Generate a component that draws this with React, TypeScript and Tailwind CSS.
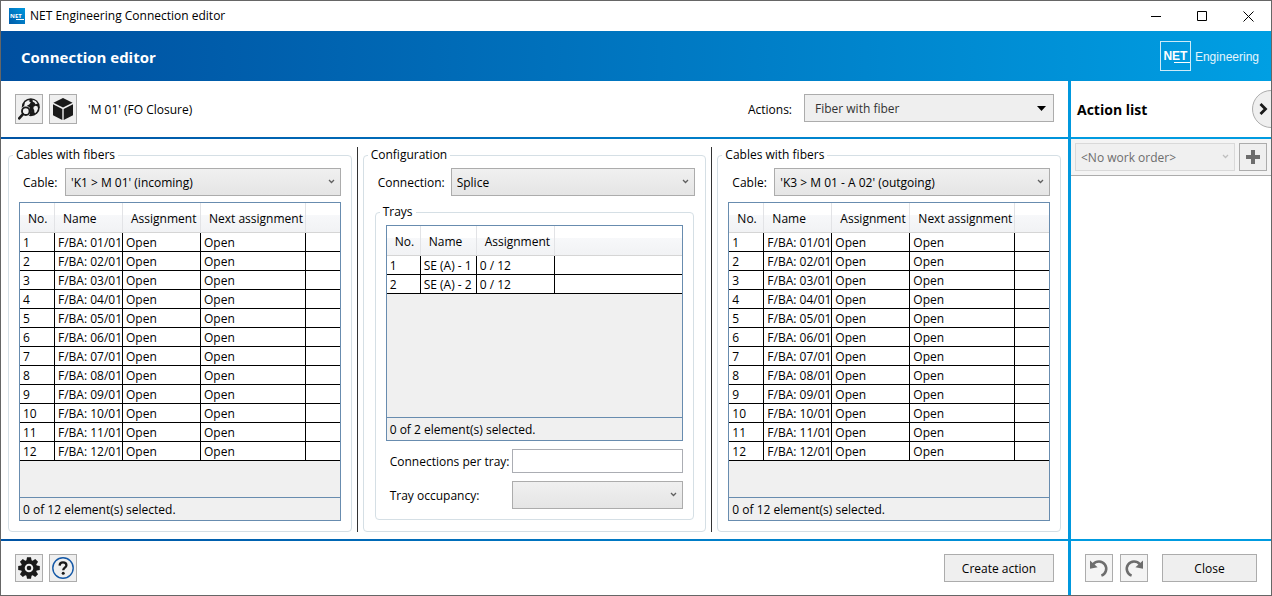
import { ReactNode } from 'react';

interface DataListProps {
  columns: string[];
  rows: string[][];
  widths: string[];
  status: string;
}

interface SelectProps {
  id: string;
  value?: string;
  className?: string;
  label?: string;
  disabled?: boolean;
}

const fibers = Array.from({ length: 12 }, (_, i) => [
  `${i + 1}`,
  `F/BA: ${String(i + 1).padStart(2, '0')}/01`,
  'Open',
  'Open',
]);

const trays = [
  ['1', 'SE (A) - 1', '0 / 12'],
  ['2', 'SE (A) - 2', '0 / 12'],
];

function Select({ id, value = '', className = '', label, disabled = false }: SelectProps) {
  return (
    <div className={`relative h-7 min-w-0 ${className}`}>
      <select
        id={id}
        disabled={disabled}
        aria-label={label}
        className={`h-full w-full appearance-none border px-[5px] pt-px ${
          disabled
            ? 'border-[#d9d9d9] bg-[#f0f0f0] text-[#6d6d6d] opacity-100'
            : 'border-[#acacac] bg-linear-to-b from-[#f0f0f0] to-[#e5e5e5] text-black'
        }`}
      >
        <option>{value}</option>
      </select>
      <svg
        className={`pointer-events-none absolute top-[11px] right-1.5 ${disabled ? 'text-[#bfbfbf]' : 'text-[#606060]'}`}
        width="7"
        height="5"
        viewBox="0 0 7 5"
        fill="none"
        stroke="currentColor"
        strokeWidth="1.3"
      >
        <path d="M1 1l2.5 2.5L6 1" />
      </svg>
    </div>
  );
}

function DataList({ columns, rows, widths, status }: DataListProps) {
  return (
    <div className="flex min-h-0 flex-1 flex-col border border-[#688caf] bg-[#f0f0f0]">
      <div className="flex-1">
        <table className="w-full table-fixed border-separate border-spacing-0 text-left">
          <colgroup>
            {widths.map((w, i) => (
              <col key={i} className={w} />
            ))}
            <col />
          </colgroup>
          <thead>
            <tr className="h-[30px] bg-linear-to-b from-white from-40% via-[#f7f8fa] via-40% to-[#f1f2f4]">
              {columns.map((title) => (
                <th
                  key={title}
                  className="border-r border-b border-r-[#e2e3e6] border-b-[#d5d5d5] p-0 pt-0.5 pl-2 font-normal whitespace-nowrap"
                >
                  {title}
                </th>
              ))}
              <th className="border-b border-[#d5d5d5] p-0" />
            </tr>
          </thead>
          <tbody>
            {rows.map((row) => (
              <tr key={row[0]} className="h-[19px] bg-white">
                {row.map((cell, i) => (
                  <td key={i} className="border-r border-b border-black p-0 pt-0.5 pl-[3px] leading-4 whitespace-nowrap">
                    {cell}
                  </td>
                ))}
                <td className="border-b border-black p-0" />
              </tr>
            ))}
          </tbody>
        </table>
      </div>
      <div className="h-[23px] border-t border-[#688caf] px-[3px] pt-1">{status}</div>
    </div>
  );
}

interface GroupBoxProps {
  title: string;
  className?: string;
  bodyClass?: string;
  children: ReactNode;
}

function GroupBox({ title, className = '', bodyClass = 'pb-2.5', children }: GroupBoxProps) {
  return (
    <fieldset className={`flex min-h-0 min-w-0 flex-1 flex-col rounded border border-[#d5dfe5] ${className}`}>
      <legend className="ml-1 px-[3px] leading-4">{title}</legend>
      <div className={`flex min-h-0 flex-1 flex-col px-2.5 pt-[5px] ${bodyClass}`}>{children}</div>
    </fieldset>
  );
}

function CablePanel({ id, cable }: { id: string; cable: string }) {
  return (
    <GroupBox title="Cables with fibers">
      <div className="mb-1.5 flex items-center">
        <label htmlFor={id} className="w-[46px] pt-0.5 pl-1">
          Cable:
        </label>
        <Select id={id} value={cable} className="flex-1" />
      </div>
      <DataList
        columns={['No.', 'Name', 'Assignment', 'Next assignment']}
        rows={fibers}
        widths={['w-[35px]', 'w-[68px]', 'w-[78px]', 'w-[105px]']}
        status="0 of 12 element(s) selected."
      />
    </GroupBox>
  );
}

function ConfigurationPanel() {
  return (
    <GroupBox title="Configuration" bodyClass="pb-[11px]">
      <div className="mb-2 flex items-center">
        <label htmlFor="connection" className="w-[77px] pt-0.5 pl-1">
          Connection:
        </label>
        <Select id="connection" value="Splice" className="flex-1" />
      </div>
      <GroupBox title="Trays" className="mx-px">
        <DataList
          columns={['No.', 'Name', 'Assignment']}
          rows={trays}
          widths={['w-[34px]', 'w-[56px]', 'w-[78px]']}
          status="0 of 2 element(s) selected."
        />
        <div className="mt-2 flex items-center">
          <label htmlFor="perTray" className="w-[126px] pt-0.5 pl-1 whitespace-nowrap">
            Connections per tray:
          </label>
          <input id="perTray" type="text" className="h-6 min-w-0 flex-1 border border-[#abadb3] bg-white px-1" />
        </div>
        <div className="mt-2 flex items-center">
          <label htmlFor="occupancy" className="w-[126px] pt-0.5 pl-1">
            Tray occupancy:
          </label>
          <Select id="occupancy" className="flex-1" />
        </div>
      </GroupBox>
    </GroupBox>
  );
}

interface ToolButtonProps {
  label: string;
  className?: string;
  disabled?: boolean;
  children: ReactNode;
}

function ToolButton({ label, className = 'h-7', disabled, children }: ToolButtonProps) {
  return (
    <button
      aria-label={label}
      disabled={disabled}
      className={`flex w-7 shrink-0 items-center justify-center border border-[#acacac] bg-[#efefef] disabled:bg-[#f4f4f4] ${className}`}
    >
      {children}
    </button>
  );
}

function GlobeSearchIcon() {
  return (
    <svg width="22" height="22" viewBox="0 0 22 22">
      <circle cx="12.8" cy="9.2" r="9" fill="#1a1a1a" />
      <path
        d="M7 4.2l3-2 1.8.2-.6 1.2 1.6.8-1.6 2-1.6.8-1 1.4-2.6-.2zM14.6 1.8l3 1.2 2 2.6-2 .6-1.2-1.8-1.6-.6zM15.6 8.8l2-1 2 .8.4 2.2-1.2 2.6-1.6 1.8-.8-.6-.2-2.600-.8-1.200z"
        fill="#efefef"
      />
      <path d="M5.6 15.6l-5 5" stroke="#efefef" strokeWidth="4" />
      <circle cx="7.8" cy="13.2" r="5.4" fill="#efefef" />
      <circle cx="7.8" cy="13.2" r="3.8" fill="#efefef" stroke="#1a1a1a" strokeWidth="1.9" />
      <path d="M5 16.2l-3.8 4.2" stroke="#1a1a1a" strokeWidth="2.6" strokeLinecap="round" />
      <path d="M11.8 9.4l2-1.6v8.600l-2 1.200z" fill="#1a1a1a" />
    </svg>
  );
}

function CubeIcon() {
  return (
    <svg width="22" height="22" viewBox="0 0 22 22" fill="#1a1a1a">
      <path d="M11 0L20.6 4.7 11 9.4 1.4 4.7z" />
      <path d="M1 6.3l9.3 4.6V22L1 17.2z" />
      <path d="M21 6.3l-9.3 4.6V22l9.3-4.8z" />
    </svg>
  );
}

function GearIcon() {
  return (
    <svg width="22" height="22" viewBox="0 0 22 22">
      <g fill="#1a1a1a">
        <circle cx="11" cy="11" r="8" />
        {[0, 45, 90, 135, 180, 225, 270, 315].map((a) => (
          <path key={a} d="M8.2 4.5L9 .2h4l.8 4.3z" transform={`rotate(${a} 11 11)`} />
        ))}
      </g>
      <circle cx="11" cy="11" r="3.3" fill="#1a1a1a" stroke="#efefef" strokeWidth="2" />
    </svg>
  );
}

function HelpIcon() {
  return (
    <svg width="22" height="22" viewBox="0 0 22 22" fill="none">
      <circle cx="11" cy="11" r="10.2" stroke="#1458a6" strokeWidth="1.4" />
      <path
        d="M7.6 8.6C7.7 6.5 9 5.4 11 5.4c2.1 0 3.4 1.1 3.4 2.8 0 2.5-3.2 2.5-3.2 5.1"
        stroke="#1a1a1a"
        strokeWidth="2.3"
      />
      <circle cx="11.2" cy="16.2" r="1.5" fill="#1a1a1a" />
    </svg>
  );
}

function UndoIcon({ flip = false }: { flip?: boolean }) {
  return (
    <svg width="20" height="20" viewBox="0 0 20 20" className={flip ? '-scale-x-100' : ''}>
      <path d="M4.2 6.2A7.3 7.3 0 1 1 12.4 17.6" fill="none" stroke="#6d6d6d" strokeWidth="2.6" />
      <path d="M1 2.6v8.2l7.6-1.6z" fill="#6d6d6d" />
    </svg>
  );
}

function TitleBar() {
  return (
    <div className="flex h-[30px] shrink-0 items-center pl-2">
      <svg width="16" height="16" className="mr-[5px]" viewBox="0 0 16 16">
        <defs>
          <linearGradient id="appIcon" x1="0" y1="1" x2="1" y2="0">
            <stop offset="0" stopColor="#005aa8" />
            <stop offset="1" stopColor="#0098de" />
          </linearGradient>
        </defs>
        <rect width="16" height="16" fill="url(#appIcon)" />
        <text x="1" y="10" fontSize="6" fontWeight="bold" fill="#fff">
          NET
        </text>
        <path d="M7 11.5h8" stroke="#fff" />
      </svg>
      <span className="flex-1">NET Engineering Connection editor</span>
      <button aria-label="Minimize" className="flex h-full w-[46px] items-center justify-center">
        <svg width="11" height="11" stroke="#000">
          <path d="M0 5.5h10" />
        </svg>
      </button>
      <button aria-label="Maximize" className="flex h-full w-[46px] items-center justify-center">
        <svg width="11" height="11" stroke="#000" fill="none">
          <path d="M.5.5h9v9h-9z" />
        </svg>
      </button>
      <button aria-label="Close window" className="flex h-full w-[46px] items-center justify-center">
        <svg width="11" height="11" stroke="#000">
          <path d="M.5.5l10 10M10.5.5l-10 10" />
        </svg>
      </button>
    </div>
  );
}

function Header() {
  return (
    <header className="flex h-[50px] shrink-0 items-center bg-linear-to-r from-[#004f9f] to-[#009fe3] pr-3 text-white">
      <h1 className="flex-1 pt-px pl-5 text-[15px] leading-5 font-bold">Connection editor</h1>
      <div className="flex items-center gap-1 font-['Liberation_Sans',sans-serif]">
        <div className="flex h-[30px] w-[31px] flex-col items-end justify-center border border-white/80 pt-px">
          <span className="w-full text-center text-[12px] leading-3 font-bold">NET</span>
          <span className="h-px w-4 bg-white" />
        </div>
        <span className="pt-0.5 text-white/90">Engineering</span>
      </div>
    </header>
  );
}

function ActionList() {
  return (
    <aside className="flex w-[200px] shrink-0 flex-col">
      <div className="flex h-14 items-center overflow-hidden pl-1.5">
        <h2 className="flex-1 pt-0.5 text-[14px] leading-5 font-bold">Action list</h2>
        <button
          aria-label="Collapse action list"
          className="-mr-[19px] flex size-[38px] items-center rounded-full border border-[#acacac] bg-[#efefef] pl-1.5"
        >
          <svg width="9" height="14" viewBox="0 0 9 14" fill="none" stroke="#1a1a1a" strokeWidth="2.8">
            <path d="M1.5 2l5 5-5 5" />
          </svg>
        </button>
      </div>
      <div className="h-0.5 bg-[#009be0]" />
      <div className="flex h-[37px] gap-1 border-b border-[#acacac] bg-[#f4f4f4] p-1">
        <Select id="workOrder" label="Work order" value="<No work order>" disabled className="flex-1" />
        <ToolButton label="Add work order">
          <svg width="14" height="14" stroke="#6d6d6d" strokeWidth="4">
            <path d="M7 0v14M0 7h14" />
          </svg>
        </ToolButton>
      </div>
      <div className="flex-1" />
      <div className="h-0.5 bg-[#009be0]" />
      <div className="flex h-[54px] items-center px-3.5">
        <ToolButton label="Undo" disabled>
          <UndoIcon />
        </ToolButton>
        <div className="w-[7px]" />
        <ToolButton label="Redo" disabled>
          <UndoIcon flip />
        </ToolButton>
        <button className="ml-3.5 h-7 flex-1 border border-[#acacac] bg-[#efefef] pt-px">Close</button>
      </div>
    </aside>
  );
}

export default function App() {
  return (
    <div className="flex h-screen min-h-[596px] flex-col border border-[#666] bg-white font-['Open_Sans','Noto_Sans',sans-serif] text-[12px] leading-4 text-black">
      <TitleBar />
      <Header />
      <div className="flex min-h-0 flex-1">
        <main className="flex min-w-0 flex-1 flex-col">
          <div className="flex h-14 items-start px-3.5 pt-[13px]">
            <ToolButton label="Show on map" className="mr-1.5 h-[30px]">
              <GlobeSearchIcon />
            </ToolButton>
            <ToolButton label="Show object" className="h-[30px]">
              <CubeIcon />
            </ToolButton>
            <span className="flex-1 pl-[11px] leading-8">'M 01' (FO Closure)</span>
            <label htmlFor="actions" className="pr-3 leading-8">
              Actions:
            </label>
            <div className="relative h-7 w-[250px]">
              <select
                id="actions"
                className="h-full w-full appearance-none border border-[#acacac] bg-[#efefef] px-2.5 pt-px text-[#333]"
              >
                <option>Fiber with fiber</option>
              </select>
              <svg className="pointer-events-none absolute top-3 right-2" width="9" height="5" fill="#000">
                <path d="M0 0h9L4.5 5z" />
              </svg>
            </div>
          </div>
          <div className="h-0.5 bg-linear-to-r from-[#0053a3] to-[#0094db]" />
          <div className="flex min-h-0 flex-1 gap-[5px] px-[7px] pt-2 pb-[7px]">
            <CablePanel id="incoming" cable="'K1 > M 01' (incoming)" />
            <div className="w-px bg-[#333]" />
            <ConfigurationPanel />
            <div className="w-px bg-[#333]" />
            <CablePanel id="outgoing" cable="'K3 > M 01 - A 02' (outgoing)" />
          </div>
          <div className="h-0.5 bg-linear-to-r from-[#0053a3] to-[#0094db]" />
          <div className="flex h-[54px] items-center gap-1.5 px-3.5">
            <ToolButton label="Settings">
              <GearIcon />
            </ToolButton>
            <ToolButton label="Help">
              <HelpIcon />
            </ToolButton>
            <button className="ml-auto h-7 w-[110px] border border-[#acacac] bg-[#efefef] pt-px">Create action</button>
          </div>
        </main>
        <div className="w-[3px] bg-[#0098de]" />
        <ActionList />
      </div>
    </div>
  );
}
